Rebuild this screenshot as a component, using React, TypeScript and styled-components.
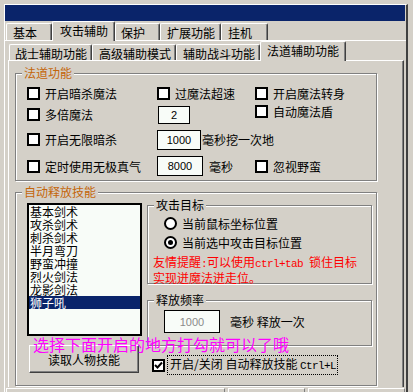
import React from "react";
import styled, { createGlobalStyle } from "styled-components";

const GlobalStyle = createGlobalStyle`
  html, body { margin: 0; padding: 0; background: #d4d0c8; }
  body { width: 413px; height: 392px; overflow: hidden; }
  * { box-sizing: border-box; }
`;

const FONT = `"Noto Sans CJK SC", "Liberation Sans", sans-serif`;

const Root = styled.div`
  position: relative;
  width: 413px;
  height: 392px;
  overflow: hidden;
  background: #d4d0c8;
  font-family: ${FONT};
  font-size: 12px;
  color: #000;
  padding: 4px 0 0 4px;
`;

const Window = styled.div`
  width: 404px;
  height: 392px;
  border-left: 1px solid #ffffff;
  border-top: 1px solid #ffffff;
  border-right: 2px solid #404040;
  display: flex;
  flex-direction: column;
`;

const TitleBar = styled.div`
  height: 16px;
  background: #0a246a;
  margin-right: 1px;
  flex: none;
`;

const TabStrip = styled.div<{ $pl: number; $h: number }>`
  display: flex;
  align-items: flex-end;
  height: ${(p) => p.$h}px;
  padding-left: ${(p) => p.$pl}px;
  flex: none;
  position: relative;
  z-index: 1;
`;

const Tab = styled.div<{ $w: number; $sel?: boolean; $pl: number; $h: number }>`
  width: ${(p) => p.$w}px;
  height: ${(p) => p.$h}px;
  padding-left: ${(p) => p.$pl}px;
  padding-top: 2px;
  line-height: 13px;
  white-space: nowrap;
  background: #d4d0c8;
  border-top: 1px solid #ffffff;
  border-left: 1px solid #ffffff;
  border-right: 1px solid #404040;
  box-shadow: inset -1px 0 0 #808080;
  border-radius: 2px 2px 0 0;
  margin-bottom: ${(p) => (p.$sel ? -1 : 0)}px;
`;

const Panel = styled.div`
  flex: none;
  border-top: 1px solid #ffffff;
  display: flex;
  flex-direction: column;
`;

const InnerPanel = styled.div`
  height: 327px;
  margin-left: 3px;
  margin-right: 2px;
  border-top: 1px solid #ffffff;
  border-left: 1px solid #ffffff;
  border-right: 1px solid #404040;
  box-shadow: inset -1px 0 0 #808080;
  padding: 12px 0 0 6px;
  display: flex;
  flex-direction: column;
  gap: 11px;
`;

const StatusBar = styled.div`
  display: flex;
  gap: 3px;
  padding: 1px 1px 0 1px;
  height: 8px;
`;

const StatusCell = styled.div<{ $w?: number }>`
  ${(p) => (p.$w ? `width: ${p.$w}px;` : "flex: 1;")}
  border-top: 1px solid #ffffff;
  border-left: 1px solid #ffffff;
  border-right: 1px solid #808080;
`;

const GroupBox = styled.div<{ $w: number; $h: number }>`
  position: relative;
  width: ${(p) => p.$w}px;
  height: ${(p) => p.$h}px;
  border: 1px solid #808080;
  box-shadow: inset 1px 1px 0 #ffffff, 1px 1px 0 #ffffff;
  flex: none;
`;

const GroupLabel = styled.div<{ $color?: string; $left: number }>`
  position: absolute;
  top: -8px;
  left: ${(p) => p.$left}px;
  padding: 0 2px;
  background: #d4d0c8;
  line-height: 14px;
  font-size: 12px;
  color: ${(p) => p.$color || "#000"};
  white-space: nowrap;
`;

const MagicGrid = styled.div`
  display: grid;
  grid-template-columns: 130px 98px 1fr;
  grid-template-rows: 18px 25px 25px 28px;
  padding: 10px 0 0 11px;
`;

const Cell = styled.div<{ $col: string; $row: string; $pt?: number; $gap?: number; $stack?: boolean }>`
  grid-column: ${(p) => p.$col};
  grid-row: ${(p) => p.$row};
  display: flex;
  flex-direction: ${(p) => (p.$stack ? "column" : "row")};
  align-items: ${(p) => (p.$stack ? "flex-start" : "center")};
  gap: ${(p) => p.$gap ?? 0}px;
  padding-top: ${(p) => p.$pt ?? 0}px;
  white-space: nowrap;
`;

const CheckItem = styled.label`
  display: flex;
  align-items: center;
  gap: 5px;
  height: 13px;
  line-height: 13px;
  white-space: nowrap;
`;

const Box = styled.span`
  width: 13px;
  height: 13px;
  border: 2px solid #000;
  background: #ffffff;
  flex: none;
  display: inline-flex;
  align-items: center;
  justify-content: center;
`;

const NumInput = styled.div<{ $w: number; $h: number; $disabled?: boolean; $ml?: number }>`
  width: ${(p) => p.$w}px;
  height: ${(p) => p.$h}px;
  margin-left: ${(p) => p.$ml ?? 0}px;
  border: 1px solid #000;
  background: #f8fcf8;
  font-family: "Liberation Sans", sans-serif;
  font-size: 11px;
  color: ${(p) => (p.$disabled ? "#8a8a8a" : "#000")};
  display: flex;
  align-items: center;
  justify-content: center;
  flex: none;
`;

const Text = styled.span<{ $ml?: number }>`
  margin-left: ${(p) => p.$ml ?? 0}px;
  white-space: nowrap;
`;

const SkillArea = styled.div`
  display: flex;
  padding: 10px 0 0 11px;
  gap: 5px;
`;

const LeftCol = styled.div`
  display: flex;
  flex-direction: column;
  gap: 9px;
`;

const ListBox = styled.div`
  width: 115px;
  height: 133px;
  border: 2px solid #000;
  background: #f8fcf8;
  display: flex;
  flex-direction: column;
`;

const ListItem = styled.div<{ $sel?: boolean }>`
  height: 13px;
  line-height: 13px;
  padding-left: 1px;
  background: ${(p) => (p.$sel ? "#0a246a" : "transparent")};
  color: ${(p) => (p.$sel ? "#ffffff" : "#000")};
  white-space: nowrap;
`;

const Button = styled.div`
  width: 110px;
  height: 28px;
  margin-left: 2px;
  background: #d4d0c8;
  border-top: 1px solid #ffffff;
  border-left: 1px solid #ffffff;
  border-right: 1px solid #404040;
  border-bottom: 1px solid #404040;
  box-shadow: inset -1px -1px 0 #808080;
  display: flex;
  align-items: center;
  justify-content: center;
`;

const RightCol = styled.div`
  display: flex;
  flex-direction: column;
  padding-top: 2px;
  gap: 16px;
`;

const TargetBody = styled.div`
  display: flex;
  flex-direction: column;
  padding: 11px 0 0 16px;
  gap: 6px;
`;

const RadioItem = styled.div`
  display: flex;
  align-items: center;
  gap: 5px;
  height: 13px;
  line-height: 13px;
  white-space: nowrap;
`;

const Radio = styled.span<{ $on?: boolean }>`
  width: 13px;
  height: 13px;
  border-radius: 50%;
  border: 2px solid #000;
  background: #fff;
  display: inline-flex;
  align-items: center;
  justify-content: center;
  flex: none;
  &::after {
    content: "";
    display: ${(p) => (p.$on ? "block" : "none")};
    width: 5px;
    height: 5px;
    border-radius: 50%;
    background: #000;
  }
`;

const Hint = styled.div`
  color: #ff0000;
  line-height: 13px;
  margin: 0 0 0 -11px;
  white-space: nowrap;
`;

const Mono = styled.span`
  font-family: "Liberation Mono", monospace;
  font-size: 11px;
  letter-spacing: -0.6px;
`;

const FreqBody = styled.div`
  display: flex;
  align-items: center;
  padding: 9px 0 0 16px;
  gap: 10px;
`;

const ToggleRow = styled.div`
  display: flex;
  align-items: center;
  gap: 3px;
  margin-top: -6px;
  padding-left: 5px;
`;

const FocusLabel = styled.span`
  outline: 1px dotted #000;
  outline-offset: 0;
  padding: 1px 1px 1px 2px;
  line-height: 13px;
  white-space: nowrap;
`;

const Overlay = styled.div`
  position: absolute;
  left: 33px;
  top: 335px;
  color: #ff00ff;
  font-size: 16px;
  line-height: 18px;
  white-space: nowrap;
`;

const CheckSvg = () => (
  <svg width="9" height="9" viewBox="0 0 9 9">
    <path d="M1 4 L3.5 6.5 L8 1.5" fill="none" stroke="#000" strokeWidth="2" />
  </svg>
);

const Check: React.FC<{ children: React.ReactNode }> = ({ children }) => (
  <CheckItem>
    <Box />
    <span>{children}</span>
  </CheckItem>
);

export default function App() {
  const skills = ["基本剑术", "攻杀剑术", "刺杀剑术", "半月弯刀", "野蛮冲撞", "烈火剑法", "龙影剑法", "狮子吼"];
  return (
    <Root>
      <GlobalStyle />
      <Window>
        <TitleBar />
        <TabStrip $pl={1} $h={19}>
          <Tab $w={46} $pl={6} $h={17}>基本</Tab>
          <Tab $w={63} $pl={7} $h={20} $sel>攻击辅助</Tab>
          <Tab $w={45} $pl={5} $h={17}>保护</Tab>
          <Tab $w={61} $pl={6} $h={17}>扩展功能</Tab>
          <Tab $w={47} $pl={6} $h={17}>挂机</Tab>
        </TabStrip>
        <Panel>
          <TabStrip $pl={4} $h={19}>
            <Tab $w={83} $pl={5} $h={16}>战士辅助功能</Tab>
            <Tab $w={84} $pl={6} $h={16}>高级辅助模式</Tab>
            <Tab $w={84} $pl={6} $h={16}>辅助战斗功能</Tab>
            <Tab $w={86} $pl={6} $h={20} $sel>法道辅助功能</Tab>
          </TabStrip>
          <InnerPanel>
            <GroupBox $w={362} $h={108}>
              <GroupLabel $left={6} $color="#c4660a">法道功能</GroupLabel>
              <MagicGrid>
                <Cell $col="1" $row="1"><Check>开启暗杀魔法</Check></Cell>
                <Cell $col="2" $row="1"><Check>过魔法超速</Check></Cell>
                <Cell $col="3" $row="1 / span 2" $stack $gap={5} $pt={3}>
                  <Check>开启魔法转身</Check>
                  <Check>自动魔法盾</Check>
                </Cell>
                <Cell $col="1" $row="2"><Check>多倍魔法</Check></Cell>
                <Cell $col="2" $row="2"><NumInput $w={32} $h={18} $ml={1}>2</NumInput></Cell>
                <Cell $col="1" $row="3"><Check>开启无限暗杀</Check></Cell>
                <Cell $col="2 / span 2" $row="3">
                  <NumInput $w={44} $h={20}>1000</NumInput>
                  <Text $ml={1}>毫秒挖一次地</Text>
                </Cell>
                <Cell $col="1" $row="4"><Check>定时使用无极真气</Check></Cell>
                <Cell $col="2" $row="4">
                  <NumInput $w={46} $h={20}>8000</NumInput>
                  <Text $ml={6}>毫秒</Text>
                </Cell>
                <Cell $col="3" $row="4"><Check>忽视野蛮</Check></Cell>
              </MagicGrid>
            </GroupBox>
            <GroupBox $w={362} $h={194}>
              <GroupLabel $left={6} $color="#c4660a">自动释放技能</GroupLabel>
              <SkillArea>
                <LeftCol>
                  <ListBox>
                    {skills.map((s) => (
                      <ListItem key={s} $sel={s === "狮子吼"}>{s}</ListItem>
                    ))}
                  </ListBox>
                  <Button>读取人物技能</Button>
                </LeftCol>
                <RightCol>
                  <GroupBox $w={225} $h={79}>
                    <GroupLabel $left={6}>攻击目标</GroupLabel>
                    <TargetBody>
                      <RadioItem><Radio />当前鼠标坐标位置</RadioItem>
                      <RadioItem><Radio $on />当前选中攻击目标位置</RadioItem>
                      <Hint>
                        友情提醒<Mono>:</Mono>可以使用<Mono>ctrl+tab </Mono>锁住目标
                        <br />
                        实现迸魔法迸走位。
                      </Hint>
                    </TargetBody>
                  </GroupBox>
                  <GroupBox $w={225} $h={46}>
                    <GroupLabel $left={6}>释放频率</GroupLabel>
                    <FreqBody>
                      <NumInput $w={56} $h={23} $disabled>1000</NumInput>
                      <Text>毫秒 释放一次</Text>
                    </FreqBody>
                  </GroupBox>
                  <ToggleRow>
                    <Box><CheckSvg /></Box>
                    <FocusLabel>开启/关闭 自动释放技能 <Mono>Ctrl+L</Mono></FocusLabel>
                  </ToggleRow>
                </RightCol>
              </SkillArea>
            </GroupBox>
          </InnerPanel>
          <StatusBar>
            <StatusCell $w={219} />
            <StatusCell $w={77} />
            <StatusCell />
          </StatusBar>
        </Panel>
      </Window>
      <Overlay>选择下面开启的地方打勾就可以了哦</Overlay>
    </Root>
  );
}
